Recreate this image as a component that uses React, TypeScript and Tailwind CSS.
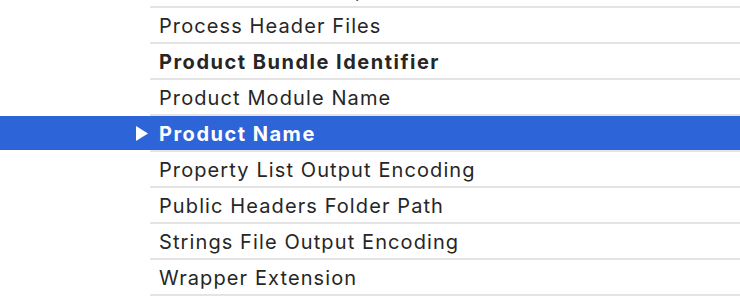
const rows: { label: string; bold?: boolean; selected?: boolean }[] = [
  { label: "Private Module Map File" },
  { label: "Process Header Files" },
  { label: "Product Bundle Identifier", bold: true },
  { label: "Product Module Name" },
  { label: "Product Name", bold: true, selected: true },
  { label: "Property List Output Encoding" },
  { label: "Public Headers Folder Path" },
  { label: "Strings File Output Encoding" },
  { label: "Wrapper Extension" },
];

const Row = ({ label, bold, selected }: { label: string; bold?: boolean; selected?: boolean }) => (
  <div className="flex h-[36px]">
    <div className={`w-[150px] flex items-center justify-end border-b-2 border-white ${selected ? "bg-[#2d64d8]" : ""}`}>
      {selected && (
        <svg width="12" height="15" viewBox="0 0 12 15" className="mr-[2px] mt-[1px]">
          <path d="M0 0 L12 7.5 L0 15 Z" fill="#ffffff" />
        </svg>
      )}
    </div>
    <div
      className={`flex-1 flex items-center pl-[9px] pt-[2px] border-b-2 border-[#e4e4e4] whitespace-nowrap overflow-hidden text-[20px] ${
        bold ? "font-bold tracking-[1.5px]" : "font-normal tracking-[1.1px]"
      } ${selected ? "bg-[#2d64d8] text-white" : "text-[#262626]"}`}
    >
      {label}
    </div>
  </div>
);

export default function App() {
  return (
    <div className="w-[740px] h-[298px] overflow-hidden bg-white font-['Inter',sans-serif]">
      <div className="-mt-[28px]">
        {rows.map((r) => (
          <Row key={r.label} {...r} />
        ))}
      </div>
    </div>
  );
}
